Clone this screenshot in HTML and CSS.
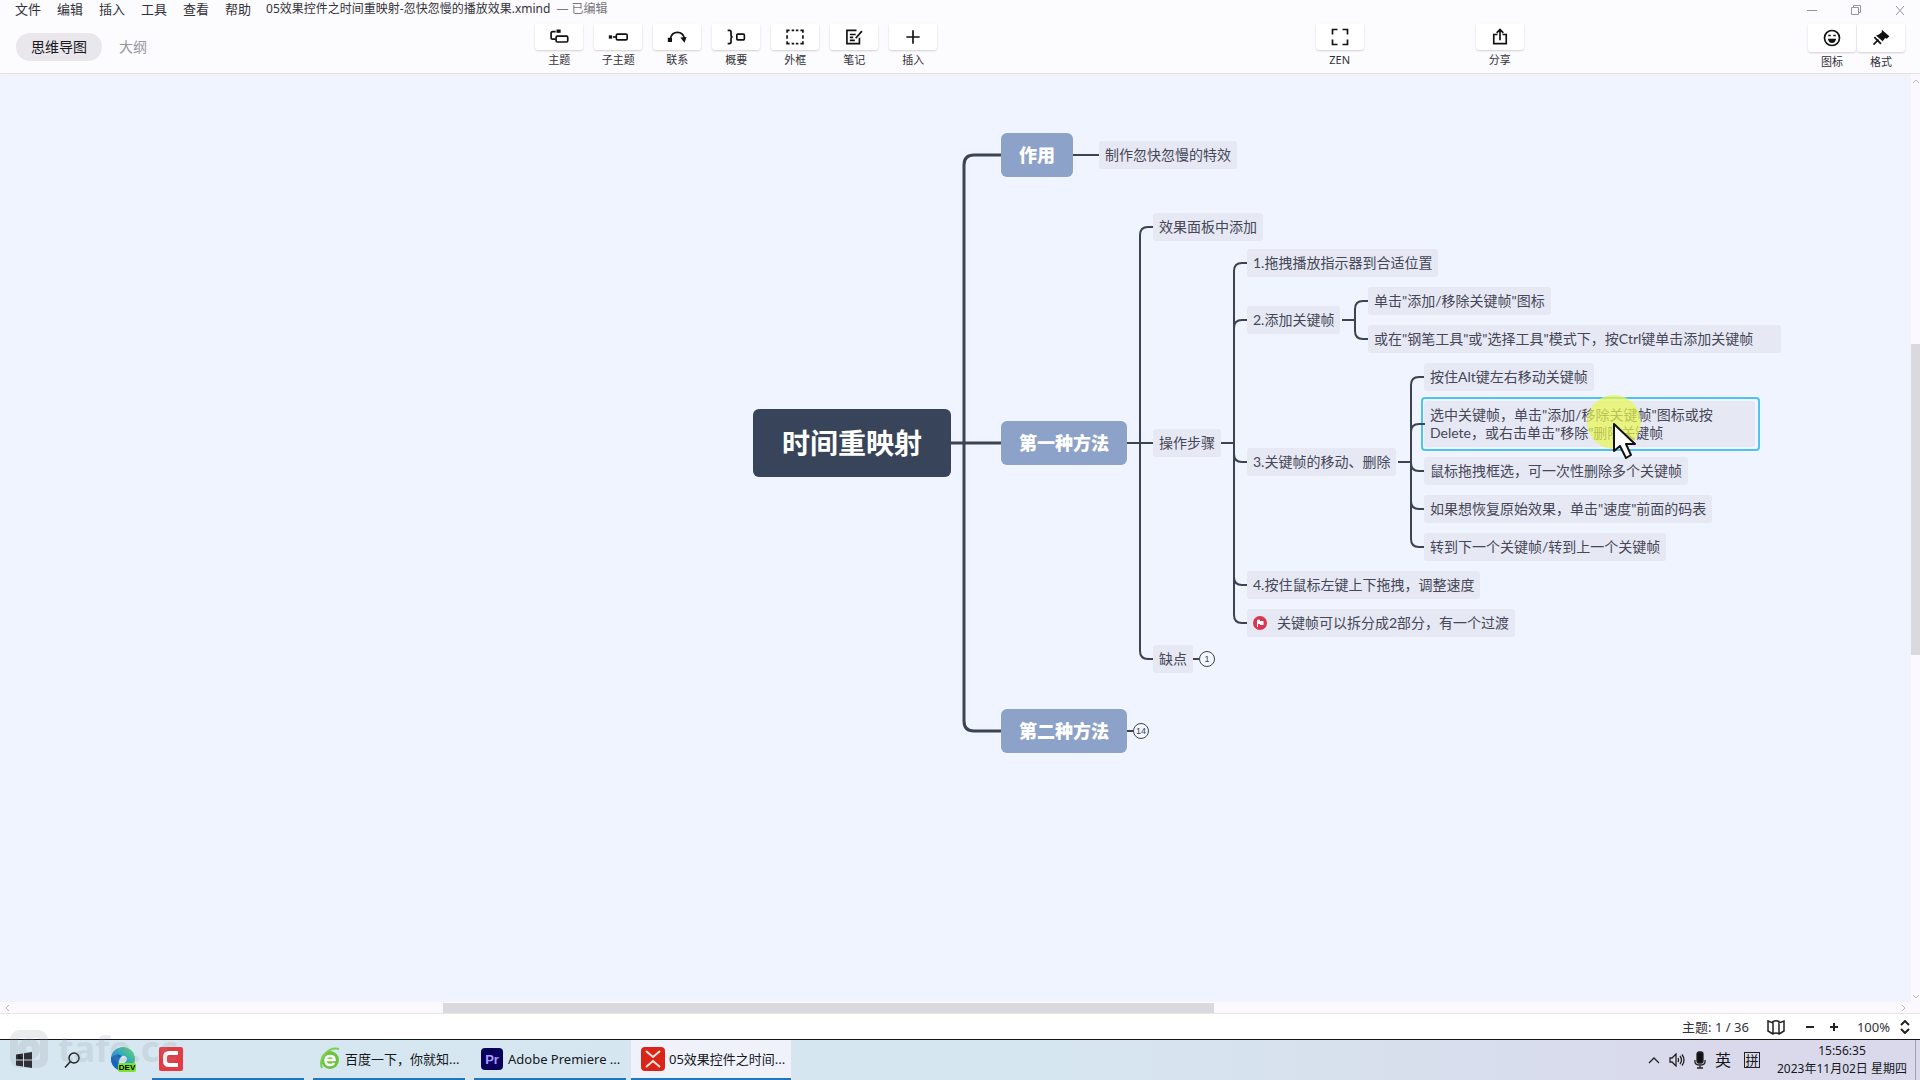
FILE: index.html
```html
<!DOCTYPE html>
<html lang="zh-CN">
<head>
<meta charset="utf-8">
<title>05效果控件之时间重映射-忽快忽慢的播放效果.xmind</title>
<link rel="stylesheet" href="styles.css">
</head>
<body>
<div class="desktop">
<header class="header">
  <div class="titlebar">
    <nav class="menu">
      <button>文件</button><button>编辑</button><button>插入</button><button>工具</button><button>查看</button><button>帮助</button>
    </nav>
    <div class="doc-title">05效果控件之时间重映射-忽快忽慢的播放效果.xmind <span class="edited">— 已编辑</span></div>
    <div class="window-controls">
      <button aria-label="最小化"><svg width="12" height="12" viewBox="0 0 12 12"><path d="M1 6.500h10"/></svg></button>
      <button aria-label="还原"><svg width="12" height="12" viewBox="0 0 12 12"><path d="M1.500 3.500h7v7h-7zM3.500 3.500v-2h7v7h-2"/></svg></button>
      <button aria-label="关闭"><svg width="12" height="12" viewBox="0 0 12 12"><path d="M2 2l8 9M10 2l-8 9"/></svg></button>
    </div>
  </div>
  <div class="toolbar">
    <div class="views"><button class="view active">思维导图</button><button class="view">大纲</button></div>
    <div class="tools">
      <button class="tool"><span class="face"><svg viewBox="0 0 24 24"><path d="M8 5.500H4.500q-2 0-2 2v5q0 2 2 2H8"/><rect x="8.500" y="11" width="14" height="7" rx="1.500"/><path class="solid" d="M9 3h5v4H9z"/></svg></span>主题</button>
      <button class="tool"><span class="face"><svg viewBox="0 0 24 24"><rect x="10" y="8.500" width="13" height="7" rx="1.500"/><path d="M6 12h4"/><path class="solid" d="M1 10h4v4H1z"/></svg></span>子主题</button>
      <button class="tool"><span class="face"><svg viewBox="0 0 24 24"><path d="M4 14c2-10 15-10 17 0"/><path class="solid" d="M1 13h5v5H1zM16 12.500l7.500-.5-2.500 7z"/></svg></span>联系</button>
      <button class="tool"><span class="face"><svg viewBox="0 0 24 24"><path d="M2 4h2q2 0 2 2v4q0 2 2 2-2 0-2 2v4q0 2-2 2H2"/><rect x="13" y="8.500" width="9" height="7" rx="1"/></svg></span>概要</button>
      <button class="tool"><span class="face"><svg viewBox="0 0 24 24"><path d="M2.500 7V4h3M8 4h3M13 4h3M18.500 4h3v3M21.500 10v4M21.500 17v3h-3M16 20h-3M11 20H8M5.500 20h-3v-3M2.500 14v-4"/></svg></span>外框</button>
      <button class="tool"><span class="face"><svg viewBox="0 0 24 24"><path d="M15 4H3.500v16h15v-7M7 9h7M7 12.500h4M7 16h6M21.500 5L14 13.500"/></svg></span>笔记</button>
      <button class="tool"><span class="face"><svg viewBox="0 0 24 24"><path d="M12 4v16M4 12h16"/></svg></span>插入</button>
    </div>
    <div class="tools"><button class="tool"><span class="face"><svg viewBox="0 0 24 24"><path d="M3 9V3h6M15 3h6v6M21 15v6h-6M9 21H3v-6"/></svg></span>ZEN</button></div>
    <div class="tools"><button class="tool"><span class="face"><svg viewBox="0 0 24 24"><path d="M9 9H4.500v11h15V9H15M12 16V3M8 7l4-4 4 4"/></svg></span>分享</button></div>
    <div class="tools panels">
      <button class="tool"><span class="face"><svg viewBox="0 0 24 24"><circle cx="12" cy="12" r="9"/><path class="solid" d="M7 13h10q-1 5-5 5t-5-5zM7.500 8h3v2h-3zM13.500 8h3v2h-3z"/></svg></span>图标</button>
      <button class="tool"><span class="face"><svg viewBox="0 0 24 24"><path d="M9 14l-6 6"/><path class="solid" d="M13 2l9 8-3 3-2-1-3 4-8-7 3-1 4-3z"/><path d="M4 11l8 8"/></svg></span>格式</button>
    </div>
  </div>
</header>

<main class="workspace">
  <section class="canvas">
    <svg class="links" aria-hidden="true">
      <g class="trunk"><path d="M951 369h50M1001 81h-27q-10 0-10 10v556q0 10 10 10h27"/></g>
      <g class="branch">
        <path d="M1073 81h26M1127 369h26M1127 657h6M1193 585h6"/>
        <path d="M1153 153h-5q-8 0-8 8v416q0 8 8 8h5"/>
        <path d="M1221 369h13M1247 189h-5q-8 0-8 8v344q0 8 8 8h5M1247 246h-5q-8 0-8 8M1247 388h-5q-8 0-8-8M1247 511h-5q-8 0-8-8"/>
        <path d="M1342 246h13M1368 227h-5q-8 0-8 8v22q0 8 8 8h5"/>
        <path d="M1398 388h13M1424 303h-5q-8 0-8 8v154q0 8 8 8h5M1424 350h-5q-8 0-8 8M1424 397h-5q-8 0-8-8M1424 435h-5q-8 0-8-8"/>
      </g>
    </svg>
    <div class="node root" style="left:753px;top:335px">时间重映射</div>
    <div class="node main" style="left:1001px;top:59px">作用</div>
    <div class="node main" style="left:1001px;top:347px">第一种方法</div>
    <div class="node main" style="left:1001px;top:635px">第二种方法</div>
    <div class="node leaf" style="left:1099px;top:67px">制作忽快忽慢的特效</div>
    <div class="node leaf" style="left:1153px;top:139px">效果面板中添加</div>
    <div class="node leaf" style="left:1153px;top:355px">操作步骤</div>
    <div class="node leaf" style="left:1153px;top:571px">缺点</div>
    <div class="node leaf" style="left:1247px;top:175px">1.拖拽播放指示器到合适位置</div>
    <div class="node leaf" style="left:1247px;top:232px">2.添加关键帧</div>
    <div class="node leaf" style="left:1247px;top:374px">3.关键帧的移动、删除</div>
    <div class="node leaf" style="left:1247px;top:497px">4.按住鼠标左键上下拖拽，调整速度</div>
    <div class="node leaf marked" style="left:1247px;top:535px"><svg width="14" height="14" viewBox="0 0 14 14"><circle cx="7" cy="7" r="7" fill="#d9364f"/><path d="M4 11V4q2-1 3 0v1h3.500v4H7V8H5v3z" fill="#fff"/></svg>关键帧可以拆分成2部分，有一个过渡</div>
    <div class="node leaf" style="left:1368px;top:213px">单击"添加/移除关键帧"图标</div>
    <div class="node leaf wide" style="left:1368px;top:251px">或在"钢笔工具"或"选择工具"模式下，按Ctrl键单击添加关键帧</div>
    <div class="node leaf" style="left:1424px;top:289px">按住Alt键左右移动关键帧</div>
    <div class="node selected" style="left:1421px;top:323px"><div class="leaf">选中关键帧，单击"添加/移除关键帧"图标或按<br>Delete，或右击单击"移除"删除关键帧</div></div>
    <div class="node leaf" style="left:1424px;top:383px">鼠标拖拽框选，可一次性删除多个关键帧</div>
    <div class="node leaf" style="left:1424px;top:421px">如果想恢复原始效果，单击"速度"前面的码表</div>
    <div class="node leaf" style="left:1424px;top:459px">转到下一个关键帧/转到上一个关键帧</div>
    <button class="node count" style="left:1199px;top:577px">1</button>
    <button class="node count" style="left:1133px;top:649px">14</button>
    <svg class="node stub" style="left:1421px;top:340px" width="4" height="20" viewBox="0 0 4 20"><path d="M0 10h4"/></svg>
    <div class="node halo" style="left:1587px;top:321px"></div>
    <svg class="node" style="left:1611px;top:347px" width="28" height="40" viewBox="0 0 28 40"><path d="M3 3v27l6-5 6 12 5-3-5-11h9z" fill="#fff" stroke="#111" stroke-width="2" stroke-linejoin="round"/></svg>
  </section>
  <div class="vscroll"><svg viewBox="0 0 8 8"><path d="M1 6l3-3 3 3"/></svg><i class="before"></i><i class="thumb"></i><i class="after"></i><svg viewBox="0 0 8 8"><path d="M1 2l3 3 3-3"/></svg></div>
  <div class="hscroll"><svg viewBox="0 0 8 8"><path d="M5 1L2 4l3 3"/></svg><i class="before"></i><i class="thumb"></i><i class="after"></i><svg viewBox="0 0 8 8"><path d="M3 1l3 3-3 3"/></svg></div>
</main>

<footer class="status">
  <span class="topic-count">主题: 1 / 36</span>
  <button class="map" aria-label="地图"><svg width="18" height="16" viewBox="0 0 18 16"><path d="M1 2l5 2V2.500q3-1.500 6 0V4l5-2v10l-5 3q-3-2-6 0l-5-3zM6 3v11M12 3v11"/></svg></button>
  <button aria-label="缩小"><svg width="10" height="10" viewBox="0 0 10 10"><path d="M1 5h8"/></svg></button>
  <button aria-label="放大"><svg width="10" height="10" viewBox="0 0 10 10"><path d="M1 5h8M5 1v8"/></svg></button>
  <span class="zoom">100%</span>
  <button aria-label="缩放比例"><svg width="10" height="14" viewBox="0 0 10 14"><path d="M1 5l4-4 4 4M1 9l4 4 4-4"/></svg></button>
</footer>

<div class="taskbar">
  <button class="sys" aria-label="开始"><svg width="16" height="16" viewBox="0 0 16 16"><path d="M0 2.500l7-1v6H0zM8 1.300L16 0v7.500H8zM0 8.500h7v6l-7-1zM8 8.500h8V16l-8-1.300z" fill="#1c1c1f"/></svg></button>
  <button class="sys" aria-label="搜索"><svg width="16" height="16" viewBox="0 0 16 16"><circle cx="10" cy="6" r="5" fill="none" stroke="#222" stroke-width="1.500"/><path d="M6.500 9.500L1 15.500" stroke="#222" stroke-width="1.500"/></svg></button>
  <button class="sys edge" aria-label="Edge Dev"><svg width="26" height="26" viewBox="0 0 26 26"><defs><linearGradient id="e1" x1="0" y1="1" x2="1" y2="0"><stop offset="0" stop-color="#1258b8"/><stop offset=".5" stop-color="#25a5cd"/><stop offset="1" stop-color="#6ddb5a"/></linearGradient></defs><circle cx="13" cy="12" r="12" fill="url(#e1)"/><path d="M11 10q3-3 6 1 0 4-3 5 4 2 8 1-5 7-11 2-4-4 0-9z" fill="#dcebf4"/><path d="M1 11q6-6 11-2-6 3-4 12-7-2-7-10z" fill="#1763bd"/><rect x="8" y="16" width="18" height="9" rx="2" fill="#7fe22f"/><text x="17" y="23" text-anchor="middle">DEV</text></svg></button>
  <button class="app icon-only" aria-label="Camtasia"><svg width="24" height="24" viewBox="0 0 24 24"><rect width="24" height="24" rx="2" fill="#e43a43"/><path d="M19 6h-9q-4 0-4 4v4q0 4 4 4h9" fill="none" stroke="#fff" stroke-width="4"/></svg></button>
  <button class="app baidu"><svg width="20" height="24" viewBox="0 0 20 24"><circle cx="10" cy="13" r="9" fill="#69c63c"/><path d="M2 21Q-1 14 5 7t14-5" fill="none" stroke="#7ed04f" stroke-width="2"/><path d="M5.500 13h9q0-4-4.500-4t-4.500 4.500 4.500 4.500q3 0 4-2" fill="none" stroke="#fff" stroke-width="2.500"/></svg>百度一下，你就知...</button>
  <button class="app"><svg width="22" height="22" viewBox="0 0 22 22"><rect width="22" height="22" rx="4" fill="#08005b"/><text class="pr" x="11" y="16" text-anchor="middle">Pr</text></svg>Adobe Premiere ...</button>
  <button class="app current"><svg width="24" height="24" viewBox="0 0 24 24"><rect width="24" height="24" rx="4" fill="#da2418"/><path d="M5 4l7 6 7-6M5 20l7-6 7 6" fill="none" stroke="#ffe9df" stroke-width="2"/></svg>05效果控件之时间...</button>
  <div class="tray">
    <svg width="12" height="8" viewBox="0 0 12 8"><path d="M1 7l5-5 5 5"/></svg>
    <svg width="16" height="14" viewBox="0 0 16 14"><path d="M1 5h2l4-4v12L3 9H1zM9 5q1 2 0 4M11 3q3 4 0 8M13 1.500q4 5.500 0 11"/></svg>
    <svg width="12" height="18" viewBox="0 0 12 18"><rect x="3" y="1" width="6" height="11" rx="2" fill="#111"/><path d="M1 9v2q0 3 5 3t5-3V9M6 14v3M3 17h6"/></svg>
    <span class="ime">英</span><span class="pinyin">拼</span>
    <div class="clock"><time>15:56:35</time><span>2023年11月02日 星期四</span></div>
  </div>
  <div class="watermark" aria-hidden="true"><svg width="38" height="38" viewBox="0 0 38 38"><rect x="4" y="4" width="30" height="30" rx="6"/><circle cx="19" cy="19" r="7"/></svg><span>tafe.cc</span></div>
</div>
</div>
</body>
</html>
```
FILE: styles.css
```css
* { box-sizing: border-box; }
body { margin: 0; font: 13px/18px "Noto Sans", "Noto Sans CJK SC", sans-serif; color: #333238; }
button { margin: 0; padding: 0; border: 0; background: none; font: inherit; color: inherit; white-space: nowrap; }
svg { display: block; flex: none; }
.desktop { height: 100vh; display: flex; flex-direction: column; overflow: hidden; background: #fff; }

.header { height: 74px; flex: none; background: #fcfbfe; border-bottom: 1px solid #e3e1e8; display: flex; flex-direction: column; }
.titlebar { height: 24px; display: flex; align-items: flex-start; padding: 0 14px 0 15px; }
.menu { display: flex; gap: 16px; }
.doc-title { margin-left: 15px; font-size: 12px; white-space: pre; }
.edited { color: #77757c; margin-left: 3px; }
.window-controls { margin-left: auto; display: flex; gap: 32px; padding-top: 4px; }
.window-controls path { fill: none; stroke: #99979d; }

.toolbar { flex: 1; display: grid; grid-template-columns: 535fr 780fr 160fr 332fr auto; padding-right: 15px; }
.views { display: flex; align-items: flex-start; gap: 17px; padding: 9px 0 0 16px; }
.view { height: 28px; border-radius: 14px; font-size: 14px; color: #99979d; }
.view.active { padding: 0 15px; background: #e9e7ec; color: #19181c; }
.tools { display: flex; gap: 11px; align-items: flex-start; }
.tool { width: 48px; font-size: 11px; line-height: 18px; display: flex; flex-direction: column; align-items: center; gap: 1px; }
.face { width: 48px; height: 26px; display: flex; justify-content: center; align-items: center; background: #fff; border-radius: 0 0 3px 3px; box-shadow: 0 1px 2px #d1cfd6; }
.face svg { width: 22px; height: 20px; fill: none; stroke: #111; stroke-width: 2; }
.face .solid { fill: #111; stroke: none; }
.panels { gap: 1px; }
.panels .face { height: 28px; }

.workspace { flex: 1; min-height: 0; display: grid; grid-template-columns: 1fr 9px; grid-template-rows: 1fr 11px; background: #fbf9fe; }
.canvas { position: relative; overflow: hidden; background: #eff4fe; box-shadow: inset 0 4px 2px #f3f2f9; }
.links { position: absolute; left: 0; top: 0; width: 100%; height: 100%; fill: none; stroke: #3b4354; }
.trunk { stroke-width: 3; }
.branch { stroke-width: 2; }
.node { position: absolute; white-space: nowrap; }
.root { padding: 17px 29px; line-height: 34px; font-size: 28px; font-weight: 700; color: #fff; background: #37445a; border-radius: 6px; }
.main { padding: 10px 18px; line-height: 24px; font-size: 18px; font-weight: 900; color: #fff; background: #8da2c8; border-radius: 6px; }
.leaf { padding: 5px 6px; font: 14px/18px Lato, "Noto Sans CJK SC", sans-serif; color: #454756; background: #e6e8f4; border-radius: 3px; }
.wide { padding-right: 28px; }
.marked { display: flex; align-items: center; gap: 10px; }
.selected { padding: 2px 3px 2px 1px; width: 339px; border: 2px solid #51c3ea; border-radius: 4px; }
.count { width: 16px; height: 16px; border: 1px solid #3b4354; border-radius: 8px; font: 9px/14px "Liberation Sans", sans-serif; color: #3b4354; background: #f4f7fe; text-align: center; }
.stub { stroke: #3b4354; stroke-width: 2; }
.halo { width: 54px; height: 54px; border-radius: 50%; background: rgba(234, 248, 80, .7); }

.vscroll { grid-row: 1 / 3; grid-column: 2; display: flex; flex-direction: column; align-items: center; padding: 3px 0 12px; }
.hscroll { display: flex; align-items: center; padding: 0 4px; }
.vscroll svg, .hscroll svg { width: 8px; height: 8px; fill: none; stroke: #b9b6bf; }
.thumb { background: #dad9e0; }
.vscroll .thumb { width: 9px; flex: 311; }
.vscroll .before { flex: 259; }
.vscroll .after { flex: 338; }
.hscroll .thumb { height: 10px; flex: 771; }
.hscroll .before { flex: 431; }
.hscroll .after { flex: 685; }

.status { height: 26px; flex: none; display: flex; align-items: center; justify-content: flex-end; gap: 14px; padding-right: 10px; border-top: 1px solid #e8e6ea; background: #fff; }
.status svg { fill: none; stroke: #222; stroke-width: 2; }
.map { padding: 0 6px 0 4px; }
.map svg { stroke-width: 1.5; }
.zoom { margin: 0 -4px 0 4px; }

.taskbar { position: relative; height: 41px; flex: none; display: flex; align-items: stretch; padding-left: 16px; border-top: 1px solid #15151a; color: #151820; background: linear-gradient(90deg, #d6e7f1, #d6e6f0 55%, #d9d9eb 90%); }
.sys { display: flex; align-items: center; margin-right: 32px; }
.sys.edge { margin: 0 16px 0 -2px; font: 700 8px "Liberation Sans", sans-serif; }
.app { width: 152px; display: flex; align-items: center; gap: 5px; padding: 0 7px; font-size: 13px; border-bottom: 2px solid #1f78bf; margin-right: 9px; text-align: left; }
.app.current { width: 160px; margin-left: -4px; padding-left: 10px; gap: 4px; background: #f0f2fb; }
.pr { font: 700 13px "Liberation Sans", sans-serif; fill: #a99cff; }
.tray { margin-left: auto; display: flex; align-items: center; gap: 9px; padding-right: 4px; }
.tray svg { fill: none; stroke: #222; stroke-width: 1.300; }
.ime { font-size: 16px; }
.pinyin { border: 1px solid #222; margin-left: 4px; width: 16px; height: 16px; line-height: 14px; font-size: 13px; text-align: center; }
.clock { display: flex; flex-direction: column; align-items: center; border-right: 1px solid #9ea0b4; padding: 0 8px; font-size: 12px; white-space: nowrap; align-self: stretch; justify-content: center; }
.watermark { position: absolute; left: 10px; top: -10px; display: flex; align-items: center; gap: 10px; color: #8f9398; opacity: .18; font: 700 36px/38px "Noto Sans", sans-serif; pointer-events: none; }
.watermark svg { fill: none; stroke: #8f9398; stroke-width: 8; }
```
